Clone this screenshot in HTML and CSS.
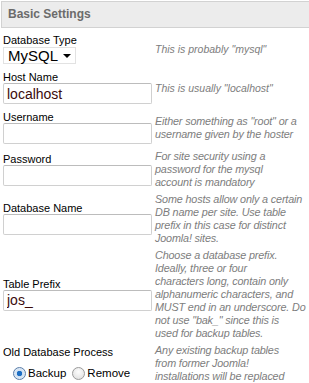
FILE: index.html
```html
<!doctype html>
<html lang="en">
  <head>
    <meta charset="UTF-8" />
    <title>Basic Settings</title>
    <link rel="stylesheet" href="styles.css">
  </head>
  <body>
    <div class="settings-panel">
      <h2 class="panel-title">Basic Settings</h2>

      <div class="settings-grid">
        <div class="field">
          <label class="field-label" for="db-type">Database Type</label>
          <div class="select-box" id="db-type">
            <span>MySQL</span>
            <span class="select-arrow"></span>
          </div>
        </div>
        <div class="hint hint-short">This is probably "mysql"</div>

        <div class="field">
          <label class="field-label" for="db-host">Host Name</label>
          <input class="text-input" id="db-host" type="text" value="localhost">
        </div>
        <div class="hint hint-short">This is usually "localhost"</div>

        <div class="field">
          <label class="field-label" for="db-user">Username</label>
          <input class="text-input" id="db-user" type="text" value="">
        </div>
        <div class="hint">Either something as "root" or a<br>username given by the hoster</div>

        <div class="field">
          <label class="field-label" for="db-pass">Password</label>
          <input class="text-input" id="db-pass" type="password" value="">
        </div>
        <div class="hint">For site security using a<br>password for the mysql<br>account is mandatory</div>

        <div class="field">
          <label class="field-label" for="db-name">Database Name</label>
          <input class="text-input" id="db-name" type="text" value="">
        </div>
        <div class="hint">Some hosts allow only a certain<br>DB name per site. Use table<br>prefix in this case for distinct<br>Joomla! sites.</div>

        <div class="field">
          <label class="field-label" for="db-prefix">Table Prefix</label>
          <input class="text-input" id="db-prefix" type="text" value="jos_">
        </div>
        <div class="hint">Choose a database prefix.<br>Ideally, three or four<br>characters long, contain only<br>alphanumeric characters, and<br>MUST end in an underscore. Do<br>not use "bak_" since this is<br>used for backup tables.</div>

        <div class="field">
          <span class="field-label">Old Database Process</span>
          <div class="radio-row">
            <label class="radio-option"><span class="radio radio-checked"></span>Backup</label>
            <label class="radio-option"><span class="radio"></span>Remove</label>
          </div>
        </div>
        <div class="hint">Any existing backup tables<br>from former Joomla!<br>installations will be replaced</div>
      </div>
    </div>
  </body>
</html>
```

FILE: styles.css
```css
:root {
  --color-border: #d2d2d2;
  --color-header: #ececec;
  --color-title: #6b6b6b;
  --color-hint: #7d7d7d;
  --color-input-text: #3b0a0a;
  --font-ui: "Liberation Sans", Arial, sans-serif;
}

body {
  margin: 0;
  background: #fff;
  font-family: var(--font-ui);
  color: #000;
  overflow: hidden;
}

.settings-panel {
  padding-top: 1px;
}

.panel-title {
  margin: 0 0 0 1px;
  height: 25px;
  line-height: 25px;
  padding-left: 6px;
  background: var(--color-header);
  border: 1px solid var(--color-border);
  border-right: none;
  font-size: 12px;
  font-weight: bold;
  color: var(--color-title);
}

.settings-grid {
  display: grid;
  grid-template-columns: 149px 1fr;
  column-gap: 3px;
  row-gap: 4px;
  align-items: center;
  padding: 5px 0 0 3px;
}

.field {
  display: flex;
  flex-direction: column;
  align-items: flex-start;
  padding: 2px 0;
}

.field-label {
  font-size: 11px;
  line-height: 11px;
}

.text-input {
  box-sizing: border-box;
  width: 149px;
  height: 21px;
  margin: 0;
  padding: 0 3px;
  border: 1px solid #d0d0d0;
  border-top-color: #bcbcbc;
  border-radius: 2px;
  font-family: var(--font-ui);
  font-size: 14px;
  color: var(--color-input-text);
  background: #fff;
}

.select-box {
  box-sizing: border-box;
  width: 73px;
  height: 17px;
  margin-top: 1px;
  display: flex;
  align-items: center;
  justify-content: space-between;
  padding: 0 4px;
  border: 1px solid #e2e2e2;
  font-size: 15px;
  line-height: 15px;
}

.select-arrow {
  width: 0;
  height: 0;
  border-left: 4px solid transparent;
  border-right: 4px solid transparent;
  border-top: 4px solid #000;
}

.hint {
  font-size: 10.8px;
  line-height: 13px;
  letter-spacing: -0.15px;
  font-style: italic;
  color: var(--color-hint);
  white-space: nowrap;
}

.hint-short {
  font-size: 10.5px;
  letter-spacing: 0;
}

.radio-row {
  display: flex;
  gap: 6px;
  height: 14px;
  margin: 8px 0 0 10px;
  font-size: 11.5px;
}

.radio-option {
  display: flex;
  align-items: center;
  gap: 2px;
}

.radio {
  box-sizing: border-box;
  width: 13px;
  height: 13px;
  border-radius: 50%;
  border: 1px solid #9a9a9a;
  background: radial-gradient(circle at 50% 35%, #fdfdfd, #dcdcdc);
}

.radio-checked {
  border-color: #5a7da8;
  background: radial-gradient(circle, #1e6fc4 0 2.5px, #cfe0f2 3px, #eef4fa 100%);
}
```
